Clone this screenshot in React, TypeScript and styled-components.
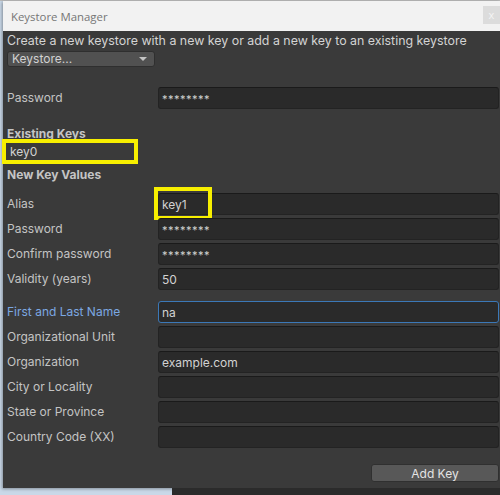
import React from "react";
import styled, { createGlobalStyle } from "styled-components";

const GlobalStyle = createGlobalStyle`
  html, body { margin: 0; padding: 0; }
  body {
    background: #c9d8e8;
    font-family: Inter, "Noto Sans", sans-serif;
    width: 500px;
    height: 495px;
    overflow: hidden;
  }
`;

const Page = styled.div`
  display: flex;
  flex-direction: column;
  width: 500px;
  height: 495px;
  border-top: 1px solid #b9b9b9;
  box-sizing: border-box;
`;

const Window = styled.div`
  margin-left: 3px;
  width: 497px;
  display: flex;
  flex-direction: column;
  box-shadow: -1px 1px 3px rgba(0, 0, 0, 0.35);
`;

const TitleBar = styled.div`
  height: 30px;
  background: #f2f2f2;
  display: flex;
  align-items: center;
  justify-content: space-between;
  padding-left: 8px;
  font-family: "Open Sans", "Noto Sans", sans-serif;
  font-size: 11.4px;
  color: #767676;
`;

const CloseButton = styled.div`
  width: 17px;
  height: 18px;
  margin-bottom: 3px;
  background: #dcdcdc;
  color: #f4f4f4;
  font-size: 11px;
  display: flex;
  align-items: center;
  justify-content: center;
`;

const Panel = styled.div`
  height: 457px;
  background: #3a3a3a;
  padding: 2px 1px 0 4px;
  box-sizing: border-box;
  display: flex;
  flex-direction: column;
  color: #c4c4c4;
  font-size: 12px;
`;

const Intro = styled.div`
  line-height: 16px;
  color: #d4d4d4;
  white-space: nowrap;
  font-size: 12.4px;
`;

const Dropdown = styled.div`
  margin-top: 2px;
  width: 148px;
  height: 16px;
  box-sizing: border-box;
  background: #515151;
  border: 1px solid #2f2f2f;
  border-radius: 3px;
  display: flex;
  align-items: center;
  justify-content: space-between;
  padding: 0 7px 0 4px;
  color: #d2d2d2;
  font-size: 12px;
  line-height: 14px;
`;

const Arrow = styled.span`
  width: 0;
  height: 0;
  border-left: 4px solid transparent;
  border-right: 4px solid transparent;
  border-top: 4px solid #c4c4c4;
`;

const Grid = styled.div<{ $top: number }>`
  display: grid;
  grid-template-columns: 151px 1fr;
  row-gap: 3px;
  margin-top: ${(p) => p.$top}px;
`;

const Label = styled.div<{ $focus?: boolean }>`
  display: flex;
  align-items: center;
  padding-bottom: 2px;
  color: ${(p) => (p.$focus ? "#7ca8e2" : "#c4c4c4")};
`;

const Field = styled.div<{ $focus?: boolean; $stars?: boolean }>`
  position: relative;
  height: 22px;
  box-sizing: border-box;
  background: #2a2a2a;
  border: 1px solid ${(p) => (p.$focus ? "#3b78b7" : "#232323")};
  border-top-color: ${(p) => (p.$focus ? "#3b78b7" : "#1a1a1a")};
  border-radius: 3px;
  padding: 0 3px;
  display: flex;
  align-items: ${(p) => (p.$stars ? "flex-start" : "center")};
  padding-top: ${(p) => (p.$stars ? "4px" : "0")};
  color: #d2d2d2;
  font-size: ${(p) => (p.$stars ? "11px" : "12px")};
  letter-spacing: ${(p) => (p.$stars ? "0.5px" : "0")};
`;

const Spacer = styled.div`
  grid-column: 1 / -1;
  height: 5px;
`;

const SectionTitle = styled.div<{ $top: number }>`
  margin-top: ${(p) => p.$top}px;
  font-weight: 700;
  line-height: 16px;
  color: #c4c4c4;
`;

const KeyItem = styled.div`
  position: relative;
  margin-top: 2px;
  line-height: 16px;
  color: #d2d2d2;
  align-self: flex-start;
  padding-left: 3px;
`;

const Highlight = styled.div<{ $l: number; $t: number; $w: number; $h: number }>`
  position: absolute;
  left: ${(p) => p.$l}px;
  top: ${(p) => p.$t}px;
  width: ${(p) => p.$w}px;
  height: ${(p) => p.$h}px;
  box-sizing: border-box;
  border: 4px solid #f7ef00;
  pointer-events: none;
`;

const Footer = styled.div`
  margin-top: 16px;
  display: flex;
  justify-content: flex-end;
`;

const Button = styled.div`
  width: 128px;
  height: 18px;
  box-sizing: border-box;
  background: #585858;
  border: 1px solid #303030;
  border-radius: 3px;
  display: flex;
  align-items: center;
  justify-content: center;
  color: #e4e4e4;
  font-size: 12px;
`;

const BottomStrip = styled.div`
  flex: 1;
  margin-left: 172px;
  background: #2b2b2b;
`;

type Row = { label: string; value?: string; stars?: boolean; focus?: boolean; gapBefore?: boolean; hl?: boolean };

const rows: Row[] = [
  { label: "Alias", value: "key1", hl: true },
  { label: "Password", value: "********", stars: true },
  { label: "Confirm password", value: "********", stars: true },
  { label: "Validity (years)", value: "50" },
  { label: "First and Last Name", value: "na", focus: true, gapBefore: true },
  { label: "Organizational Unit" },
  { label: "Organization", value: "example.com" },
  { label: "City or Locality" },
  { label: "State or Province" },
  { label: "Country Code (XX)" },
];

export default function App() {
  return (
    <>
      <GlobalStyle />
      <Page>
        <Window>
          <TitleBar>
            <span>Keystore Manager</span>
            <CloseButton>x</CloseButton>
          </TitleBar>
          <Panel>
            <Intro>Create a new keystore with a new key or add a new key to an existing keystore</Intro>
            <Dropdown>
              <span>Keystore...</span>
              <Arrow />
            </Dropdown>
            <Grid $top={20}>
              <Label>Password</Label>
              <Field $stars>********</Field>
            </Grid>
            <SectionTitle $top={17}>Existing Keys</SectionTitle>
            <KeyItem>
              key0
              <Highlight $l={-5} $t={-5} $w={136} $h={25} />
            </KeyItem>
            <SectionTitle $top={7}>New Key Values</SectionTitle>
            <Grid $top={10}>
              {rows.map((r) => (
                <React.Fragment key={r.label}>
                  {r.gapBefore && <Spacer />}
                  <Label $focus={r.focus}>{r.label}</Label>
                  <Field $focus={r.focus} $stars={r.stars}>
                    {r.value}
                    {r.hl && <Highlight $l={-5} $t={-7} $w={58} $h={33} />}
                  </Field>
                </React.Fragment>
              ))}
            </Grid>
            <Footer>
              <Button>Add Key</Button>
            </Footer>
          </Panel>
        </Window>
        <BottomStrip />
      </Page>
    </>
  );
}
